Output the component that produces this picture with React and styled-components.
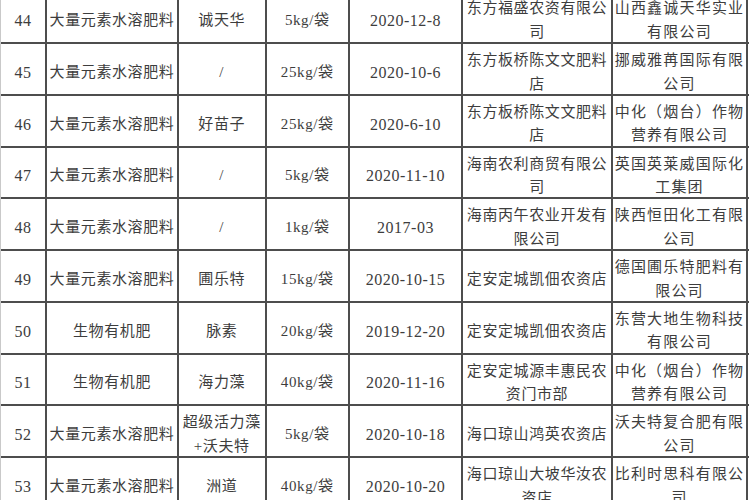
import React from 'react';
import styled, { createGlobalStyle } from 'styled-components';

const GlobalStyle = createGlobalStyle`
  html, body {
    margin: 0;
    padding: 0;
    background: #ffffff;
  }
`;

const rows = [
  ['44', '大量元素水溶肥料', '诚天华', '5kg/袋', '2020-12-8', '东方福盛农资有限公\n司', '山西鑫诚天华实业\n有限公司'],
  ['45', '大量元素水溶肥料', '/', '25kg/袋', '2020-10-6', '东方板桥陈文文肥料\n店', '挪威雅苒国际有限\n公司'],
  ['46', '大量元素水溶肥料', '好苗子', '25kg/袋', '2020-6-10', '东方板桥陈文文肥料\n店', '中化（烟台）作物\n营养有限公司'],
  ['47', '大量元素水溶肥料', '/', '5kg/袋', '2020-11-10', '海南农利商贸有限公\n司', '英国英莱威国际化\n工集团'],
  ['48', '大量元素水溶肥料', '/', '1kg/袋', '2017-03', '海南丙午农业开发有\n限公司', '陕西恒田化工有限\n公司'],
  ['49', '大量元素水溶肥料', '圃乐特', '15kg/袋', '2020-10-15', '定安定城凯佃农资店', '德国圃乐特肥料有\n限公司'],
  ['50', '生物有机肥', '脉素', '20kg/袋', '2019-12-20', '定安定城凯佃农资店', '东营大地生物科技\n有限公司'],
  ['51', '生物有机肥', '海力藻', '40kg/袋', '2020-11-16', '定安定城源丰惠民农\n资门市部', '中化（烟台）作物\n营养有限公司'],
  ['52', '大量元素水溶肥料', '超级活力藻\n+沃夫特', '5kg/袋', '2020-10-18', '海口琼山鸿英农资店', '沃夫特复合肥有限\n公司'],
  ['53', '大量元素水溶肥料', '洲道', '40kg/袋', '2020-10-20', '海口琼山大坡华汝农\n资店', '比利时思科有限公\n司'],
];

const Page = styled.div`
  width: 750px;
  height: 500px;
  overflow: hidden;
  background: #ffffff;
`;

const Sheet = styled.div`
  margin-top: -7.75px;
  width: 748px;
  border-left: 1px solid #c9c9c9;
  display: flex;
  flex-direction: column;
`;

const Row = styled.div`
  display: grid;
  grid-template-columns: 46px 132px 87.5px 83.5px 113px 150px 135px;
  height: 51.75px;
  box-sizing: border-box;
  border-bottom: 2px solid #4d4d4d;
`;

const Cell = styled.div`
  box-sizing: border-box;
  border-right: 2px solid #4d4d4d;
  display: flex;
  align-items: center;
  justify-content: center;
  text-align: center;
  white-space: pre;
  padding: 5px 0 0;
  color: #3d3d3d;
  font-family: "Liberation Serif", "Noto Sans CJK SC", serif;
  font-size: ${p => (p.$latin ? '16px' : '15px')};
  letter-spacing: ${p => (p.$latin ? '0.5px' : p.$wide ? '1.2px' : '0.6px')};
  line-height: 23.5px;
`;

export default function App() {
  return (
    <Page>
      <GlobalStyle />
      <Sheet>
        {rows.map(r => (
          <Row key={r[0]}>
            {r.map((v, i) => (
              <Cell key={i} $latin={i === 0 || i === 4} $wide={i === 6}>{v}</Cell>
            ))}
          </Row>
        ))}
      </Sheet>
    </Page>
  );
}
